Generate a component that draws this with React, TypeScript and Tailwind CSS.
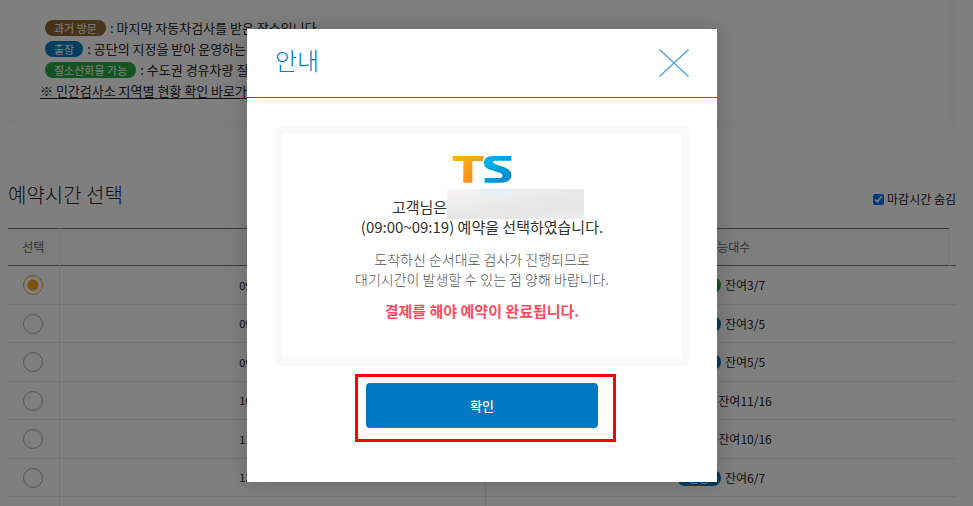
import { useState } from 'react'

const LEGEND = [
  { badge: '과거 방문', color: 'bg-[#8f6632]', text: '마지막 자동차검사를 받은 장소입니다.' },
  { badge: '출장', color: 'bg-[#007bc3]', text: '공단의 지정을 받아 운영하는' },
  { badge: '질소산화물 가능', color: 'bg-[#28a745]', text: '수도권 경유차량 질소' },
]

const SLOTS = [
  { time: '09:00 ~ 09:19', left: '3/7', color: 'bg-[#28a745]' },
  { time: '09:20 ~ 09:39', left: '3/5', color: 'bg-[#007bc3]' },
  { time: '09:40 ~ 09:59', left: '5/5', color: 'bg-[#007bc3]' },
  { time: '10:00 ~ 10:59', left: '11/16', color: 'bg-[#007bc3]' },
  { time: '11:00 ~ 11:59', left: '10/16', color: 'bg-[#007bc3]' },
  { time: '12:00 ~ 12:19', left: '6/7', color: 'bg-[#007bc3]' },
]

function Logo() {
  return (
    <svg viewBox="0 0 180 81" className="w-[60px] h-[27px] shrink-0" role="img" aria-label="TS">
      <defs>
        <linearGradient id="orange" x1="0" y1="0" x2="1" y2="1">
          <stop offset="0" stopColor="#fdb913" />
          <stop offset="1" stopColor="#f58220" />
        </linearGradient>
        <linearGradient id="blue" gradientUnits="userSpaceOnUse" x1="96" y1="0" x2="178" y2="81">
          <stop offset="0" stopColor="#00b9f1" />
          <stop offset="1" stopColor="#0083ca" />
        </linearGradient>
      </defs>
      <path d="M0 0H96L93 15H61V80H34V15H4Z" fill="url(#orange)" />
      <path
        d="M178 0H122C103 0 96 10 96 20C96 32 104 38 118 42L144 51C155 55 154 66 143 66H98V80H146C168 80 178 70 178 57C178 46 170 39 157 34L129 24C119 20 121 14 130 14H178Z"
        fill="url(#blue)"
      />
    </svg>
  )
}

function Notice() {
  return (
    <section className="border-8 border-t-0 border-[#f9f9f9] rounded-b-md px-6 pt-[17px] pb-[18px] text-[13px] leading-[21px]">
      <ul>
        {LEGEND.map(item => (
          <li key={item.badge} className="flex items-center gap-1 pl-[5px]">
            <span className={`${item.color} text-white text-[11px] leading-4 rounded-full px-[9px]`}>{item.badge}</span>
            <span>: {item.text}</span>
          </li>
        ))}
      </ul>
      <a href="#centers" className="flex w-fit underline underline-offset-2">
        ※ 민간검사소 지역별 현황 확인 바로가기
      </a>
    </section>
  )
}

function SlotTable() {
  const [selected, setSelected] = useState(0)

  return (
    <table className="w-full table-fixed border-collapse text-xs text-center mt-[19px]">
      <colgroup>
        <col className="w-[51px]" />
        <col className="w-[45%]" />
        <col />
        <col className="w-[7px]" />
      </colgroup>
      <thead>
        <tr className="h-[37px] border-b border-[#777] text-[#666]">
          <th className="font-normal bg-[#fbfbfb] border-t border-t-[#777] border-r border-r-[#eee]">선택</th>
          <th className="font-normal bg-[#fbfbfb] border-t border-t-[#777] border-r border-r-[#eee]">예약시간</th>
          <th className="font-normal bg-[#fbfbfb] border-t border-t-[#777] border-r border-r-[#eee]">예약가능대수</th>
          <td />
        </tr>
      </thead>
      <tbody>
        {SLOTS.map((slot, i) => (
          <tr key={slot.time} className="h-[39px] even:h-[38px] border-b border-[#e8e8e8]">
            <td className="border-r border-[#e8e8e8]">
              <input
                type="radio"
                name="slot"
                aria-label={slot.time}
                checked={selected === i}
                onChange={() => setSelected(i)}
                className="appearance-none block mx-auto w-5 h-5 rounded-full border border-[#aaa] checked:border-[#f5a51c] checked:bg-[radial-gradient(circle,#f5a51c_5px,transparent_6px)]"
              />
            </td>
            <td className="border-r border-[#e8e8e8] text-[11px]">{slot.time}</td>
            <td colSpan={2}>
              <span className="inline-flex items-center gap-1">
                <span className={`${slot.color} w-11 rounded-full text-white text-[11px] leading-4`}>출장</span>
                잔여{slot.left}
              </span>
            </td>
          </tr>
        ))}
        <tr className="h-[39px]">
          <td className="border-r border-[#e8e8e8]" />
          <td className="border-r border-[#e8e8e8]" />
          <td colSpan={2} />
        </tr>
      </tbody>
    </table>
  )
}

function ConfirmDialog() {
  return (
    <div
      role="dialog"
      aria-modal="true"
      aria-labelledby="dialog-title"
      className="w-full max-w-[470px] bg-white shadow-[0_0_20px_rgba(0,0,0,0.2)]"
    >
      <header className="h-[69px] px-7 flex items-center justify-between border-b border-[#0073b8]">
        <h2 id="dialog-title" className="text-2xl font-light text-[#007bc3] pb-1.5">안내</h2>
        <button type="button" aria-label="닫기">
          <svg viewBox="0 0 30 28" className="w-[30px] h-7" fill="none" stroke="#4ba3d8" strokeWidth="1.3">
            <path d="M.5 .5l29 27M29.5 .5l-29 27" />
          </svg>
        </button>
      </header>

      <div className="px-7 pt-7 pb-[54px]">
        <div className="border-8 border-[#f9f9f9] rounded-md h-[241px] pt-[22px] flex flex-col items-center text-center">
          <Logo />
          <div className="mt-[14px] text-[15px] leading-5 text-[#333]">
            <p className="flex items-start justify-center pl-3">
              고객님은
              <span className="w-[137px] h-[30px] -mt-2 -mb-0.5 bg-[radial-gradient(ellipse_at_36%_0,#dceef7_0,transparent_20%),linear-gradient(170deg,#f8f6f5_0%,#e8e8e8_50%,#e6e6e6_75%,#f0f0f0_100%)]" />
            </p>
            <p>(09:00~09:19) 예약을 선택하였습니다.</p>
          </div>
          <p className="mt-3 text-sm leading-5 font-light text-[#555]">
            도착하신 순서대로 검사가 진행되므로
            <br />
            대기시간이 발생할 수 있는 점 양해 바랍니다.
          </p>
          <p className="mt-3 text-[15px] leading-5 font-bold text-[#ff4b60]">결제를 해야 예약이 완료됩니다.</p>
        </div>

        <div className="relative w-[232px] mx-auto mt-4">
          <button type="button" className="block w-full h-[45px] rounded bg-[#007ac3] text-white text-[13px] font-medium">
            확인
          </button>
          {/* highlight frame */}
          <span className="absolute -top-[9px] -left-[11px] -right-[18px] -bottom-[14px] border-3 border-[#ff0000] pointer-events-none" />
        </div>
      </div>
    </div>
  )
}

export default function App() {
  const [hideClosed, setHideClosed] = useState(true)

  return (
    <div className="relative h-screen overflow-hidden bg-white text-[#222] font-['Noto_Sans_CJK_KR',sans-serif]">
      <main className="pl-2 pr-[17px]">
        <Notice />
        <div className="mt-[54px] flex items-center justify-between">
          <h1 className="text-xl leading-7 font-light">예약시간 선택</h1>
          <label className="flex items-center gap-[3px] text-xs leading-4 mt-2">
            <input
              type="checkbox"
              checked={hideClosed}
              onChange={e => setHideClosed(e.target.checked)}
              className="w-[11px] h-[11px] accent-[#0075ff]"
            />
            마감시간 숨김
          </label>
        </div>
        <SlotTable />
      </main>

      <div className="absolute inset-0 bg-black/50 flex items-start justify-center pt-[29px] pr-[9px]">
        <ConfirmDialog />
      </div>
    </div>
  )
}
